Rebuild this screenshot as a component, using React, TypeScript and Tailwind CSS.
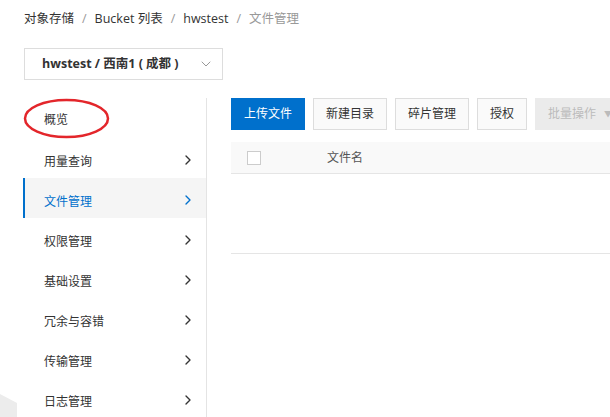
import { ChevronDown, ChevronRight } from "lucide-react";

const menu = ["概览", "用量查询", "文件管理", "权限管理", "基础设置", "冗余与容错", "传输管理", "日志管理"];
const crumbs = ["对象存储", "Bucket 列表", "hwstest"];

export default function App() {
  return (
    <div
      className="relative h-[417px] w-[610px] overflow-hidden bg-white text-[12px] text-[#333]"
      style={{ fontFamily: '"Open Sans", "Noto Sans CJK SC", sans-serif' }}
    >
      {/* breadcrumb */}
      <div className="flex h-[38px] items-center pl-6 text-[12.5px]">
        {crumbs.map((c) => (
          <span key={c} className="flex items-center">
            <span>{c}</span>
            <span className="mx-[8px] text-[#999]">/</span>
          </span>
        ))}
        <span className="text-[#999]">文件管理</span>
      </div>

      {/* bucket select */}
      <div className="ml-6 mt-[10px] flex h-8 w-[199px] items-center justify-between border border-[#ddd] pl-[17px] pr-[8px]">
        <span className="text-[12.5px] font-bold text-[#333]">hwstest / 西南1 ( 成都 )</span>
        <ChevronDown className="h-4 w-4 text-[#999]" strokeWidth={1.5} />
      </div>

      <div className="mt-[18px] flex">
        {/* sidebar */}
        <div className="w-[207px] shrink-0 border-r border-[#e4e4e4] pl-[23px]">
          {menu.map((m, i) => {
            const active = m === "文件管理";
            return (
              <div
                key={m}
                className={`flex h-10 items-center justify-between border-l-2 pl-[19px] pr-[10px] ${
                  active ? "border-[#0070cc] bg-[#f5f5f5] text-[#0070cc]" : "border-transparent text-[#333]"
                }`}
              >
                <span className={i === 0 ? "pt-[3px]" : "pt-[7px]"}>{m}</span>
                {i > 0 && <ChevronRight className="mt-[4px] h-4 w-4" strokeWidth={2} />}
              </div>
            );
          })}
        </div>

        {/* main */}
        <div className="min-w-0 flex-1 pl-6">
          <div className="flex gap-2 whitespace-nowrap">
            <button className="h-8 bg-[#0070cc] px-[13px] text-white">上传文件</button>
            <button className="h-8 border border-[#ddd] bg-[#fafafa] px-[12px]">新建目录</button>
            <button className="h-8 border border-[#ddd] bg-[#fafafa] px-[12px]">碎片管理</button>
            <button className="h-8 border border-[#ddd] bg-[#fafafa] px-[12px]">授权</button>
            <button className="flex h-8 items-center gap-2 bg-[#ebebeb] px-[13px] text-[#bbb]">
              批量操作
              <span className="text-[8px]">▼</span>
            </button>
          </div>

          <div className="mt-3 flex h-8 items-center border-b border-[#e5e5e5] bg-[#f9f9f9] pl-4">
            <span className="h-[14px] w-[14px] border border-[#ccc] bg-white" />
            <span className="ml-[66px] text-[#555]">文件名</span>
          </div>
          <div className="h-20 border-b border-[#e5e5e5]" />
        </div>
      </div>

      {/* hand-drawn red annotation */}
      <svg className="pointer-events-none absolute left-0 top-0" width="610" height="417">
        <ellipse cx="66.5" cy="118.5" rx="41.5" ry="18.5" fill="none" stroke="#e3262b" strokeWidth="2.5" />
        <polygon points="0,394 17,403 17,417 0,417" fill="#ececec" />
      </svg>
    </div>
  );
}
